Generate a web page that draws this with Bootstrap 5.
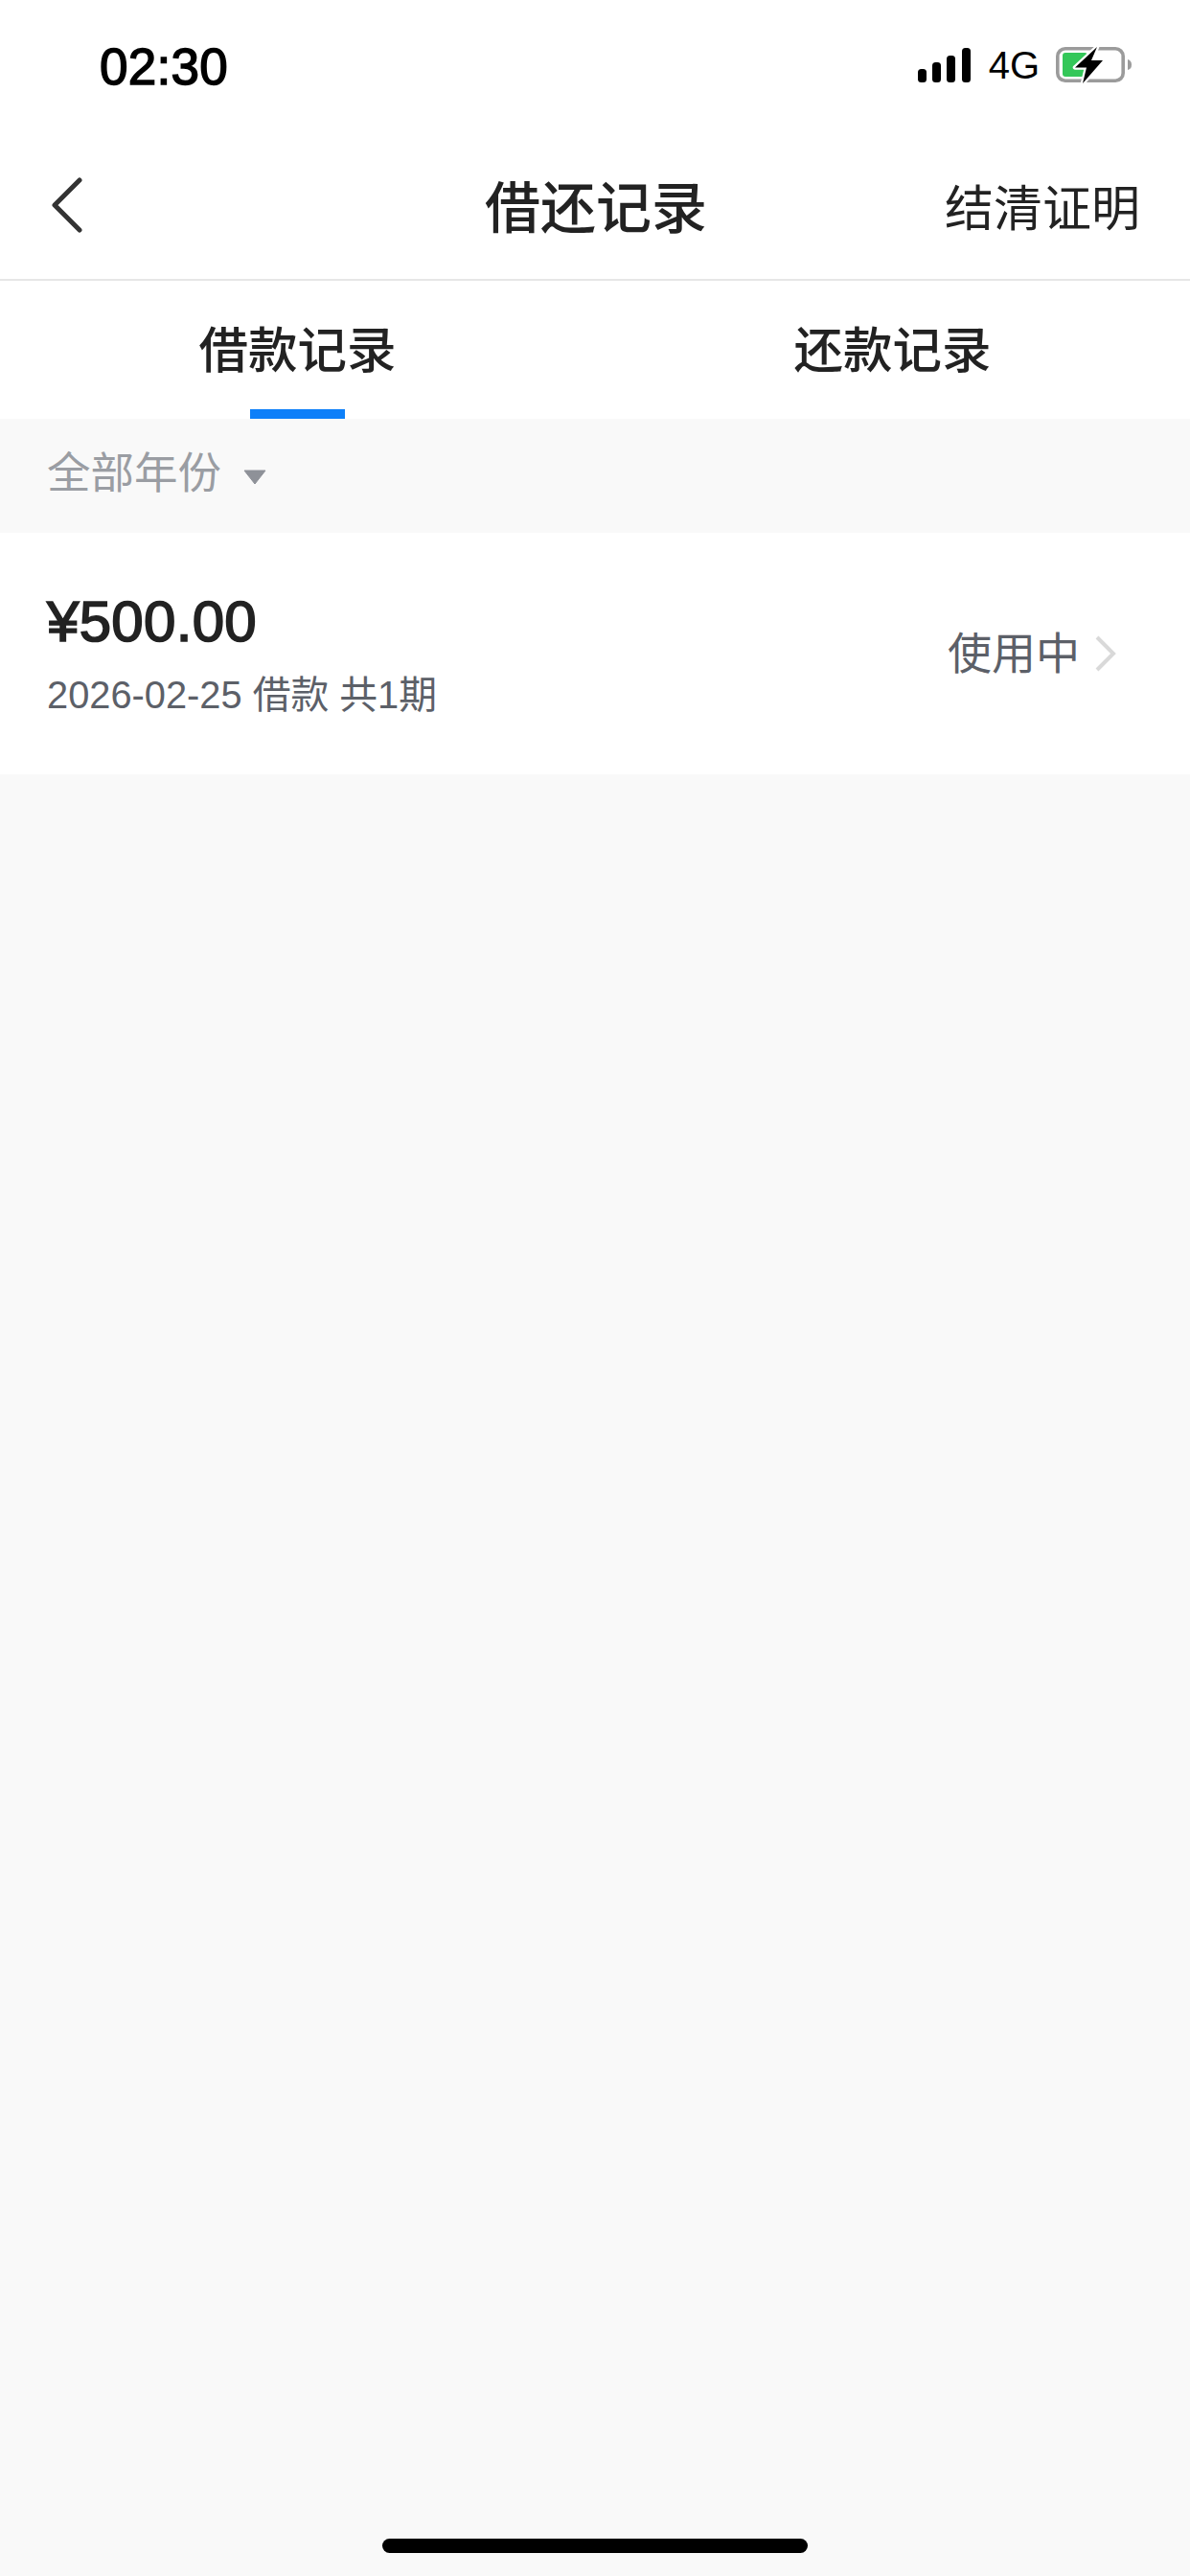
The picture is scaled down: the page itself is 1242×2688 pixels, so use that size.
<!DOCTYPE html>
<html lang="zh-CN">
<head>
<meta charset="utf-8">
<title>借还记录</title>
<link href="https://cdn.jsdelivr.net/npm/bootstrap@5.3.0/dist/css/bootstrap.min.css" rel="stylesheet">
<style>
html, body { background: #f9f9f9; }
body { font-family: "Liberation Sans", "Noto Sans CJK SC", sans-serif; color: #222; margin: 0; }
.app-page { width: 1242px; height: 2688px; }
.app-head { background: #fff; height: 293px; border-bottom: 2px solid #e6e6e6; }
.status-row { height: 136px; padding: 0 60px 0 104px; }
.clock-text { font-size: 53px; font-weight: 400; -webkit-text-stroke: 1.5px #000; letter-spacing: .3px; color: #000; line-height: 1; margin-top: 2px; }
.net-text { font-size: 40px; color: #000; line-height: 1; margin: 0 17px 0 18px; }
.title-row { display: grid; grid-template-columns: 1fr auto 1fr; height: 155px; padding: 0 52px 0 54px; }
.title-text { font-size: 58px; font-weight: 500; line-height: 1; padding-top: 9px; }
.proof-text { font-size: 51px; line-height: 1; padding-top: 9px; }
.back-icon { margin-top: 1px; }
.tab-row { background: #fff; height: 144px; }
.tab-item { font-size: 51.5px; font-weight: 500; line-height: 1; padding-top: 48px; }
.tab-mark { width: 99px; height: 10px; background: #0d80f9; }
.filter-row { height: 119px; padding: 0 0 3px 49px; background: #f9f9f9; color: #9a9da3; font-size: 45.5px; line-height: 1; }
.filter-arrow { margin-left: 23px; margin-top: 6px; }
.loan-row { background: #fff; height: 252px; padding: 0 77px 0 49px; }
.loan-amount { font-size: 60px; font-weight: 400; -webkit-text-stroke: 1.7px #222; letter-spacing: .3px; line-height: 1; color: #222; }
.loan-meta { font-size: 39.8px; line-height: 1; color: #5c6068; margin-top: 27px; }
.loan-state { font-size: 46px; line-height: 1; color: #5c6068; }
.loan-chevron { margin-left: 16px; }
.home-pill { width: 444px; height: 15px; border-radius: 8px; background: #000; margin-bottom: 24px; }
</style>
</head>
<body>
<div class="app-page d-flex flex-column">
  <header class="app-head">
    <div class="status-row d-flex align-items-center justify-content-between">
      <div class="clock-text">02:30</div>
      <div class="d-flex align-items-center">
        <svg width="56" height="36" viewBox="0 0 56 36" aria-hidden="true"><rect x="0" y="22" width="9" height="14" rx="3.5" fill="#000"/><rect x="15" y="15" width="9" height="21" rx="3.5" fill="#000"/><rect x="30" y="8" width="9" height="28" rx="3.5" fill="#000"/><rect x="46" y="0" width="9" height="36" rx="3.5" fill="#000"/></svg>
        <span class="net-text">4G</span>
        <svg width="80" height="40" viewBox="0 -1 80 40" aria-hidden="true">
          <rect x="1.8" y="1.8" width="68.4" height="33.4" rx="8" fill="none" stroke="#9b9b9b" stroke-width="3.6"/>
          <path d="M75 13 q4 1 4 5.500 q0 4.500 -4 5.500z" fill="#9b9b9b"/>
          <rect x="7" y="6" width="26" height="25" rx="3" fill="#34c759"/>
          <path d="M43 0L20 21.500H32L28 38L49 14H37Z" fill="#000" stroke="#fff" stroke-width="4.500" stroke-linejoin="round"/>
          <path d="M43 0L20 21.500H32L28 38L49 14H37Z" fill="#000"/>
        </svg>
      </div>
    </div>
    <div class="title-row align-items-center">
      <div>
        <svg class="d-block back-icon" width="32" height="58" viewBox="0 0 32 58" aria-hidden="true"><path d="M29 3L3 29L29 55" fill="none" stroke="#333" stroke-width="5" stroke-linecap="round" stroke-linejoin="round"/></svg>
      </div>
      <div class="title-text">借还记录</div>
      <div class="proof-text text-end">结清证明</div>
    </div>
  </header>

  <nav class="tab-row d-flex">
    <div class="tab-item flex-fill w-50 d-flex flex-column align-items-center justify-content-between">
      <span>借款记录</span><span class="tab-mark"></span>
    </div>
    <div class="tab-item flex-fill w-50 d-flex flex-column align-items-center">
      <span>还款记录</span>
    </div>
  </nav>

  <div class="filter-row d-flex align-items-center">
    <span>全部年份</span>
    <svg class="filter-arrow" width="24" height="16" viewBox="0 0 24 16" aria-hidden="true"><path d="M1 1H23L12 15Z" fill="#8e9198" stroke="#8e9198" stroke-linejoin="round"/></svg>
  </div>

  <div class="loan-row d-flex align-items-center justify-content-between">
    <div>
      <div class="loan-amount">¥500.00</div>
      <div class="loan-meta">2026-02-25 借款 共1期</div>
    </div>
    <div class="d-flex align-items-center">
      <span class="loan-state">使用中</span>
      <svg class="loan-chevron" width="22" height="38" viewBox="0 0 22 38" aria-hidden="true"><path d="M2 2L19 19L2 36" fill="none" stroke="#d9d9d9" stroke-width="4"/></svg>
    </div>
  </div>

  <div class="mt-auto d-flex justify-content-center">
    <div class="home-pill"></div>
  </div>
</div>
<script src="https://cdn.jsdelivr.net/npm/bootstrap@5.3.0/dist/js/bootstrap.bundle.min.js"></script>
</body>
</html>
